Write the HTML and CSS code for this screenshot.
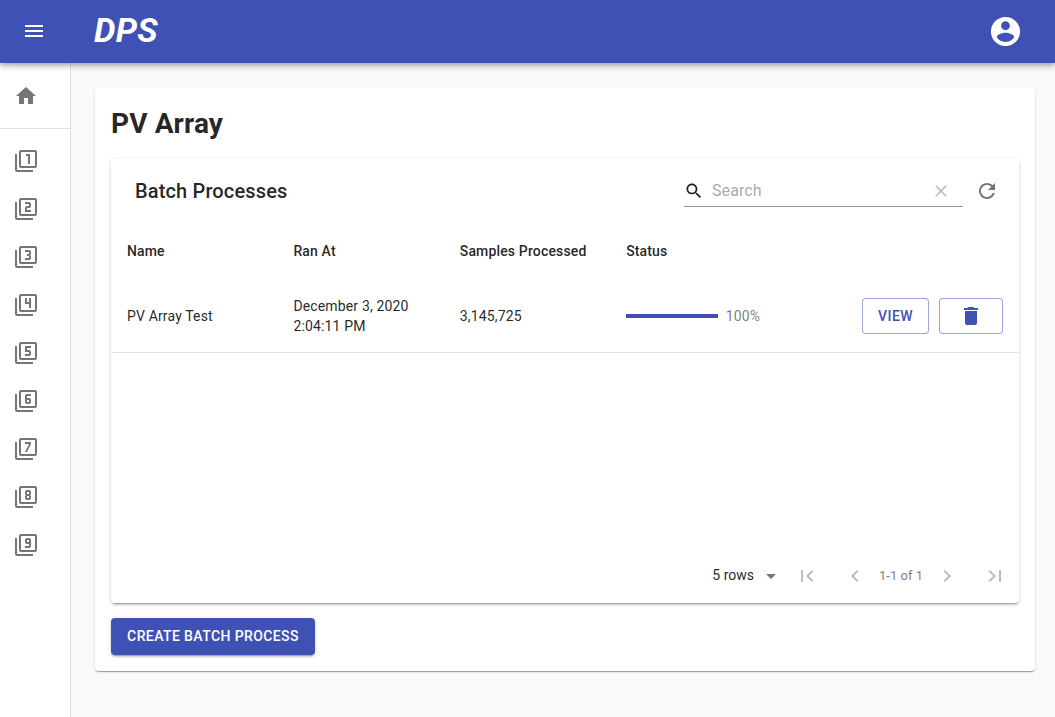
FILE: index.html
```html
<!DOCTYPE html>
<html lang="en">
<head>
<meta charset="utf-8">
<title>DPS</title>
<link rel="stylesheet" href="styles.css">
</head>
<body>
<svg class="defs" aria-hidden="true">
  <symbol id="frame" viewBox="0 0 24 24"><path d="M3 5H1v16c0 1.1.9 2 2 2h16v-2H3V5zm18-4H7c-1.1 0-2 .9-2 2v14c0 1.1.9 2 2 2h14c1.1 0 2-.9 2-2V3c0-1.1-.9-2-2-2zm0 16H7V3h14v14z"/></symbol>
</svg>
<header class="appbar">
  <svg class="icon menu" viewBox="0 0 24 24"><path d="M3 18h18v-2H3v2zm0-5h18v-2H3v2zm0-7v2h18V6H3z"/></svg>
  <div class="brand">DPS</div>
  <svg class="icon account" viewBox="0 0 24 24"><path d="M12 2C6.48 2 2 6.48 2 12s4.48 10 10 10 10-4.48 10-10S17.52 2 12 2zm0 3c1.66 0 3 1.34 3 3s-1.34 3-3 3-3-1.34-3-3 1.34-3 3-3zm0 14.200c-2.500 0-4.710-1.280-6-3.220.030-1.990 4-3.080 6-3.080 1.990 0 5.970 1.090 6 3.080-1.290 1.940-3.500 3.220-6 3.220z"/></svg>
</header>
<div class="body">
  <nav class="sidebar">
    <div class="nav-group">
      <a class="nav-item"><svg class="icon" viewBox="0 0 24 24"><path d="M10 20v-6h4v6h5v-8h3L12 3 2 12h3v8z"/></svg></a>
    </div>
    <div class="nav-group">
      <a class="nav-item"><svg class="icon" viewBox="0 0 24 24"><use href="#frame"/><path d="M14 15h2V5h-4v2h2v8z"/></svg></a>
      <a class="nav-item"><svg class="icon" viewBox="0 0 24 24"><use href="#frame"/><path d="M17 13h-4v-2h2c1.100 0 2-.890 2-2V7c0-1.110-.900-2-2-2h-4v2h4v2h-2c-1.100 0-2 .890-2 2v4h6v-2z"/></svg></a>
      <a class="nav-item"><svg class="icon" viewBox="0 0 24 24"><use href="#frame"/><path d="M17 13v-1.500c0-.830-.670-1.500-1.500-1.500.830 0 1.500-.670 1.500-1.500V7c0-1.110-.900-2-2-2h-4v2h4v2h-2v2h2v2h-4v2h4c1.100 0 2-.890 2-2z"/></svg></a>
      <a class="nav-item"><svg class="icon" viewBox="0 0 24 24"><use href="#frame"/><path d="M15 15h2V5h-2v4h-2V5h-2v6h4v4z"/></svg></a>
      <a class="nav-item"><svg class="icon" viewBox="0 0 24 24"><use href="#frame"/><path d="M17 13v-2c0-1.110-.900-2-2-2h-2V7h4V5h-6v6h4v2h-4v2h4c1.100 0 2-.890 2-2z"/></svg></a>
      <a class="nav-item"><svg class="icon" viewBox="0 0 24 24"><use href="#frame"/><path d="M13 15h2c1.100 0 2-.890 2-2v-2c0-1.110-.900-2-2-2h-2V7h4V5h-4c-1.100 0-2 .890-2 2v6c0 1.110.900 2 2 2zm0-4h2v2h-2v-2z"/></svg></a>
      <a class="nav-item"><svg class="icon" viewBox="0 0 24 24"><use href="#frame"/><path d="M13 15l4-8V5h-6v2h4l-4 8h2z"/></svg></a>
      <a class="nav-item"><svg class="icon" viewBox="0 0 24 24"><use href="#frame"/><path d="M13 15h2c1.100 0 2-.890 2-2v-1.500c0-.830-.670-1.500-1.500-1.500.830 0 1.500-.670 1.500-1.500V7c0-1.110-.900-2-2-2h-2c-1.100 0-2 .890-2 2v1.500c0 .830.670 1.500 1.500 1.500-.830 0-1.500.670-1.500 1.500V13c0 1.110.900 2 2 2zm0-8h2v2h-2V7zm0 4h2v2h-2v-2z"/></svg></a>
      <a class="nav-item"><svg class="icon" viewBox="0 0 24 24"><use href="#frame"/><path d="M15 5h-2c-1.100 0-2 .890-2 2v2c0 1.110.900 2 2 2h2v2h-4v2h4c1.100 0 2-.890 2-2V7c0-1.110-.900-2-2-2zm0 4h-2V7h2v2z"/></svg></a>
    </div>
  </nav>
  <main class="content">
    <section class="paper page">
      <h1 class="page-title">PV Array</h1>
      <div class="paper table-card">
        <div class="toolbar">
          <h2 class="table-title">Batch Processes</h2>
          <div class="search">
            <svg class="icon small" viewBox="0 0 24 24"><path d="M15.500 14h-.790l-.280-.270C15.410 12.590 16 11.110 16 9.500 16 5.910 13.090 3 9.500 3S3 5.910 3 9.500 5.910 16 9.500 16c1.610 0 3.090-.590 4.230-1.570l.270.280v.790l5 4.990L20.490 19l-4.990-5zm-6 0C7.010 14 5 11.990 5 9.500S7.010 5 9.500 5 14 7.010 14 9.500 11.990 14 9.500 14z"/></svg>
            <span class="placeholder">Search</span>
            <svg class="icon small disabled" viewBox="0 0 24 24"><path d="M19 6.410L17.590 5 12 10.590 6.410 5 5 6.410 10.590 12 5 17.590 6.410 19 12 13.410 17.590 19 19 17.590 13.410 12z"/></svg>
          </div>
          <svg class="icon refresh" viewBox="0 0 24 24"><path d="M17.650 6.350C16.200 4.900 14.210 4 12 4c-4.420 0-7.990 3.580-7.990 8s3.570 8 7.990 8c3.730 0 6.840-2.550 7.730-6h-2.080c-.820 2.330-3.040 4-5.650 4-3.310 0-6-2.690-6-6s2.690-6 6-6c1.660 0 3.140.690 4.220 1.780L13 11h7V4l-2.350 2.350z"/></svg>
        </div>
        <div class="row head">
          <div>Name</div><div>Ran At</div><div>Samples Processed</div><div>Status</div><div></div>
        </div>
        <div class="row data">
          <div>PV Array Test</div>
          <div>December 3, 2020<br>2:04:11 PM</div>
          <div>3,145,725</div>
          <div class="status"><span class="bar"></span><span class="percent">100%</span></div>
          <div class="actions">
            <button class="btn outlined view">View</button>
            <button class="btn outlined trash"><svg class="icon" viewBox="0 0 24 24"><path d="M6 19c0 1.100.900 2 2 2h8c1.100 0 2-.900 2-2V7H6v12zM19 4h-3.500l-1-1h-5l-1 1H5v2h14V4z"/></svg></button>
          </div>
        </div>
        <div class="pager">
          <span class="rows">5 rows</span>
          <svg class="icon caret" viewBox="0 0 24 24"><path d="M7 10l5 5 5-5z"/></svg>
          <svg class="icon disabled first" viewBox="0 0 24 24"><path d="M18.410 16.590L13.820 12l4.590-4.590L17 6l-6 6 6 6zM6 6h2v12H6z"/></svg>
          <svg class="icon disabled prev" viewBox="0 0 24 24"><path d="M15.410 7.410L14 6l-6 6 6 6 1.410-1.410L10.830 12z"/></svg>
          <span class="range">1-1 of 1</span>
          <svg class="icon disabled" viewBox="0 0 24 24"><path d="M10 6L8.590 7.410 13.170 12l-4.580 4.590L10 18l6-6z"/></svg>
          <svg class="icon disabled last" viewBox="0 0 24 24"><path d="M5.590 7.410L10.180 12l-4.590 4.590L7 18l6-6-6-6zM16 6h2v12h-2z"/></svg>
        </div>
      </div>
      <button class="btn contained">Create Batch Process</button>
    </section>
  </main>
</div>
</body>
</html>
```
FILE: styles.css
```css
* { box-sizing: border-box; }
body {
  margin: 0;
  height: 717px;
  overflow: hidden;
  display: flex;
  flex-direction: column;
  background: #fafafa;
  color: rgba(0, 0, 0, 0.87);
  font: 400 14px/20px Roboto, sans-serif;
}
h1, h2 { margin: 0; }
.defs { display: none; }
.icon { width: 24px; height: 24px; fill: currentColor; flex: none; display: block; }
.icon.small { width: 20px; height: 20px; }
.disabled { color: rgba(0, 0, 0, 0.26); }

.appbar {
  position: relative;
  z-index: 1;
  height: 63px;
  flex: none;
  display: flex;
  align-items: center;
  padding: 0 32px 0 22px;
  background: #3f51b5;
  color: #fff;
  box-shadow: 0 2px 4px -1px rgba(0,0,0,.2), 0 4px 5px 0 rgba(0,0,0,.14), 0 1px 10px 0 rgba(0,0,0,.12);
}
.menu { margin-bottom: 1px; }
.brand { margin-left: 48px; font-size: 34px; line-height: 40px; font-weight: 700; font-style: italic; letter-spacing: 0.25px; padding-bottom: 4px; }
.account { width: 35px; height: 35px; margin-left: auto; }

.body { flex: 1; display: flex; min-height: 0; }
.sidebar { width: 71px; flex: none; padding-top: 1px; background: #fff; border-right: 1px solid #e0e0e0; color: rgba(0,0,0,.54); }
.nav-group { padding: 8px 0; }
.nav-group + .nav-group { border-top: 1px solid #e0e0e0; }
.nav-item { height: 48px; padding-left: 14px; display: flex; align-items: center; }

.content { flex: 1; padding: 24px 20px 0 24px; }
.paper {
  background: #fff;
  border-radius: 4px;
  box-shadow: 0 2px 1px -1px rgba(0,0,0,.2), 0 1px 1px 0 rgba(0,0,0,.14), 0 1px 3px 0 rgba(0,0,0,.12);
}
.page { height: 584px; padding: 16px; }
.page-title { font-size: 28px; line-height: 42px; height: 56px; font-weight: 700; letter-spacing: 0.12px; }
.table-card {
  height: 444px;
  display: flex;
  flex-direction: column;
  box-shadow: 0 3px 1px -2px rgba(0,0,0,.2), 0 2px 2px 0 rgba(0,0,0,.14), 0 1px 5px 0 rgba(0,0,0,.12);
}
.toolbar { height: 64px; display: flex; align-items: center; padding: 0 20px 0 24px; }
.table-title { font-size: 20px; line-height: 32px; font-weight: 500; letter-spacing: 0.15px; }
.search { width: 279px; height: 32px; margin: 0 12px 0 auto; display: flex; align-items: center; border-bottom: 1px solid #949494; }
.placeholder { flex: 1; margin-left: 8px; font-size: 16px; letter-spacing: 0.1px; color: rgba(0,0,0,.37); }
.search .disabled { margin-right: 12px; }
.refresh { color: rgba(0,0,0,.54); }

.row { display: grid; grid-template-columns: repeat(4, 166.400px) 1fr; align-items: center; padding: 0 16px; letter-spacing: 0.15px; }
.head { height: 57px; padding-bottom: 2px; font-weight: 500; }
.data { height: 73px; border-bottom: 1px solid #e0e0e0; }
.status { display: flex; align-items: center; }
.bar { width: 91.500px; height: 4px; background: #3f51b5; }
.percent { margin-left: 8px; color: rgba(0,0,0,.54); }
.actions { display: flex; justify-content: flex-end; gap: 10px; }

.btn {
  font: 500 14px/24px Roboto, sans-serif;
  letter-spacing: 0.4px;
  text-transform: uppercase;
  border: 0;
  border-radius: 4px;
  padding: 0;
  display: flex;
  align-items: center;
  justify-content: center;
}
.outlined { height: 36px; background: #fff; color: #3f51b5; border: 1px solid rgba(63,81,181,.5); }
.view { width: 67px; }
.trash { width: 64px; }
.contained {
  width: 204px;
  height: 37px;
  margin-top: 15px;
  padding-bottom: 1px;
  background: #3f51b5;
  color: #fff;
  box-shadow: 0 3px 1px -2px rgba(0,0,0,.2), 0 2px 2px 0 rgba(0,0,0,.14), 0 1px 5px 0 rgba(0,0,0,.12);
}

.pager { margin-top: auto; height: 54px; display: flex; align-items: center; padding-right: 12px; }
.rows { margin-left: auto; padding-bottom: 2px; }
.caret { color: rgba(0,0,0,.54); margin-left: 5px; }
.first { margin-left: 12px; }
.prev { margin-left: 24px; }
.range { width: 68px; text-align: center; font-size: 13px; color: rgba(0,0,0,.54); }
.last { margin-left: 24px; }
```
